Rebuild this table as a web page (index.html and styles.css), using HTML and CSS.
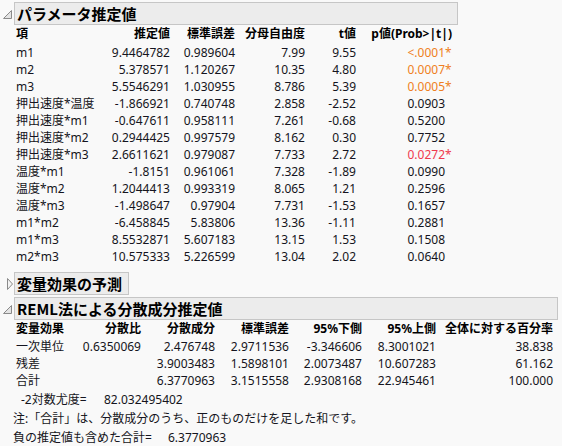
FILE: index.html
```html
<!DOCTYPE html>
<html lang="ja">
<head>
<meta charset="utf-8">
<link rel="stylesheet" href="styles.css">
</head>
<body>
<div class="sec">
  <div class="head">
    <svg class="tri" width="14" height="12" viewBox="0 0 14 12"><polygon points="11.5,2.5 11.5,10.5 3.5,10.5" fill="#e4e4e4" stroke="#8a8a8a" stroke-width="1"/></svg>
    <div class="title t-param">パラメータ推定値</div>
  </div>
  <div class="grid g1">
    <div class="th l">項</div><div class="th">推定値</div><div class="th">標準誤差</div><div class="th">分母自由度</div><div class="th">t値</div><div class="th">p値(Prob&gt;|t|)</div>

    <div class="l">m1</div><div>9.4464782</div><div>0.989604</div><div>7.99</div><div>9.55</div><div class="or">&lt;.0001<span class="st">*</span></div>
    <div class="l">m2</div><div>5.378571</div><div>1.120267</div><div>10.35</div><div>4.80</div><div class="or">0.0007<span class="st">*</span></div>
    <div class="l">m3</div><div>5.5546291</div><div>1.030955</div><div>8.786</div><div>5.39</div><div class="or">0.0005<span class="st">*</span></div>
    <div class="l">押出速度*温度</div><div>-1.866921</div><div>0.740748</div><div>2.858</div><div>-2.52</div><div>0.0903<span class="st"></span></div>
    <div class="l">押出速度*m1</div><div>-0.647611</div><div>0.958111</div><div>7.261</div><div>-0.68</div><div>0.5200<span class="st"></span></div>
    <div class="l">押出速度*m2</div><div>0.2944425</div><div>0.997579</div><div>8.162</div><div>0.30</div><div>0.7752<span class="st"></span></div>
    <div class="l">押出速度*m3</div><div>2.6611621</div><div>0.979087</div><div>7.733</div><div>2.72</div><div class="rd">0.0272<span class="st">*</span></div>
    <div class="l">温度*m1</div><div>-1.8151</div><div>0.961061</div><div>7.328</div><div>-1.89</div><div>0.0990<span class="st"></span></div>
    <div class="l">温度*m2</div><div>1.2044413</div><div>0.993319</div><div>8.065</div><div>1.21</div><div>0.2596<span class="st"></span></div>
    <div class="l">温度*m3</div><div>-1.498647</div><div>0.97904</div><div>7.731</div><div>-1.53</div><div>0.1657<span class="st"></span></div>
    <div class="l">m1*m2</div><div>-6.458845</div><div>5.83806</div><div>13.36</div><div>-1.11</div><div>0.2881<span class="st"></span></div>
    <div class="l">m1*m3</div><div>8.5532871</div><div>5.607183</div><div>13.15</div><div>1.53</div><div>0.1508<span class="st"></span></div>
    <div class="l">m2*m3</div><div>10.575333</div><div>5.226599</div><div>13.04</div><div>2.02</div><div>0.0640<span class="st"></span></div>
  </div>
</div>

<div class="sec sec2">
  <div class="head">
    <svg class="tri" width="14" height="14" viewBox="0 0 14 14"><polygon points="7.5,1.5 12.5,7 7.5,12.5" fill="#f4f4f4" stroke="#8a8a8a" stroke-width="1"/></svg>
    <div class="title">変量効果の予測</div>
  </div>
</div>

<div class="sec sec3">
  <div class="head">
    <svg class="tri" width="14" height="12" viewBox="0 0 14 12"><polygon points="11.5,2.5 11.5,10.5 3.5,10.5" fill="#e4e4e4" stroke="#8a8a8a" stroke-width="1"/></svg>
    <div class="title t-reml">REML法による分散成分推定値</div>
  </div>
  <div class="grid g2">
    <div class="th l">変量効果</div><div class="th">分散比</div><div class="th">分散成分</div><div class="th">標準誤差</div><div class="th">95%下側</div><div class="th">95%上側</div><div class="th">全体に対する百分率</div>

    <div class="l">一次単位</div><div>0.6350069</div><div>2.476748</div><div>2.9711536</div><div>-3.346606</div><div>8.3001021</div><div>38.838</div>
    <div class="l">残差</div><div></div><div>3.9003483</div><div>1.5898101</div><div>2.0073487</div><div>10.607283</div><div>61.162</div>
    <div class="l">合計</div><div></div><div>6.3770963</div><div>3.1515558</div><div>2.9308168</div><div>22.945461</div><div>100.000</div>
  </div>
  <div class="line ll"><span class="lab1">-2対数尤度=</span><span>82.032495402</span></div>
  <div class="line note">注:「合計」は、分散成分のうち、正のものだけを足した和です。</div>
  <div class="line note"><span class="lab2">負の推定値も含めた合計=</span><span>6.3770963</span></div>
</div>
</body>
</html>
```

FILE: styles.css
```css
html, body {
  margin: 0;
  padding: 0;
  background: #f9f9f9;
}
body {
  padding-top: 2px;
  font-family: "Noto Sans", "Noto Sans CJK JP", sans-serif;
  font-size: 12px;
  color: #141420;
}
.head {
  display: flex;
  align-items: center;
  height: 23px;
}
.tri {
  width: 14px;
  flex: none;
  align-self: center;
}
.title {
  box-sizing: border-box;
  height: 23px;
  line-height: 21px;
  padding: 0 6px 0 2px;
  border: 1px solid #c6c6c6;
  background: #ececec;
  font-family: "Noto Sans CJK JP", sans-serif;
  font-weight: bold;
  font-size: 15px;
  color: #000;
  white-space: nowrap;
}
.t-param { width: 444px; }
.t-reml { width: 544px; }
.grid {
  display: grid;
  margin-left: 16px;
  grid-auto-rows: 17px;
  line-height: 17px;
  white-space: nowrap;
}
.grid > div { text-align: right; }
.grid > div.l { text-align: left; }
.th {
  font-weight: bold;
  font-family: "Noto Sans", "Noto Sans CJK JP", sans-serif;
  color: #000;
}
.g1 {
  grid-template-columns: 94px 60px 65px 70px 51px 96px;
  grid-template-rows: 19px;
}
.g2 {
  grid-template-columns: 59px 66px 74px 74px 73px 74px 117px;
  grid-template-rows: 18px;
}
.st {
  display: inline-block;
  width: 7px;
  text-align: left;
}
.or { color: #ef7f22; }
.rd { color: #ef3a4e; }
.sec2 { margin-top: 7px; }
.sec3 { margin-top: 2px; }
.line {
  height: 19px;
  line-height: 19px;
  white-space: nowrap;
  display: flex;
}
.ll { margin-top: 1px; padding-left: 21px; }
.lab1 { width: 83px; }
.note { padding-left: 13px; }
.lab2 { width: 155px; }
```
